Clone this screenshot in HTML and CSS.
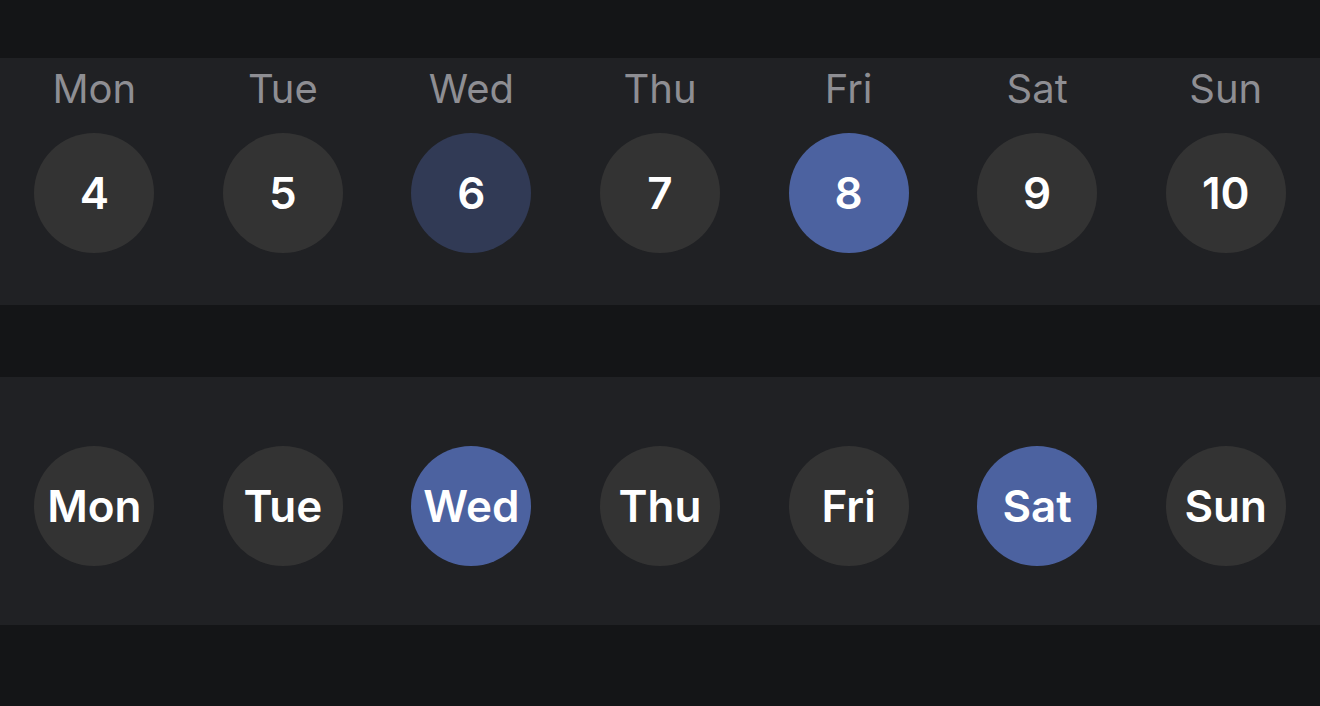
FILE: index.html
```html
<!DOCTYPE html>
<html>
<head>
<meta charset="utf-8">
<link rel="stylesheet" href="styles.css">
</head>
<body>
<div class="page">
  <section class="band band-dates">
    <div class="col"><div class="dow">Mon</div><div class="circle">4</div></div>
    <div class="col"><div class="dow">Tue</div><div class="circle">5</div></div>
    <div class="col"><div class="dow">Wed</div><div class="circle today">6</div></div>
    <div class="col"><div class="dow">Thu</div><div class="circle">7</div></div>
    <div class="col"><div class="dow">Fri</div><div class="circle selected">8</div></div>
    <div class="col"><div class="dow">Sat</div><div class="circle">9</div></div>
    <div class="col"><div class="dow">Sun</div><div class="circle">10</div></div>
  </section>
  <section class="band band-days">
    <div class="col"><div class="circle">Mon</div></div>
    <div class="col"><div class="circle">Tue</div></div>
    <div class="col"><div class="circle selected">Wed</div></div>
    <div class="col"><div class="circle">Thu</div></div>
    <div class="col"><div class="circle">Fri</div></div>
    <div class="col"><div class="circle selected">Sat</div></div>
    <div class="col"><div class="circle">Sun</div></div>
  </section>
</div>
</body>
</html>
```
FILE: styles.css
```css
html, body {
  margin: 0;
  padding: 0;
  background: #141517;
  font-family: Inter, "Noto Sans", sans-serif;
}
.page {
  width: 1320px;
  height: 706px;
  padding-top: 58px;
  box-sizing: border-box;
  display: flex;
  flex-direction: column;
  gap: 72px;
}
.band {
  background: #202124;
  display: flex;
}
.band-dates {
  height: 247px;
  box-sizing: border-box;
  padding-top: 7px;
}
.band-days {
  height: 248px;
  box-sizing: border-box;
  padding-top: 69px;
}
.col {
  flex: 1;
  display: flex;
  flex-direction: column;
  align-items: center;
}
.dow {
  font-size: 40px;
  line-height: 48px;
  color: #8e8e93;
  font-weight: 400;
}
.band-dates .circle {
  margin-top: 20px;
}
.circle {
  width: 120px;
  height: 120px;
  border-radius: 50%;
  background: #333333;
  color: #ffffff;
  display: flex;
  align-items: center;
  justify-content: center;
  font-size: 44px;
  font-weight: 600;
  white-space: nowrap;
}
.circle.today {
  background: #313a55;
}
.circle.selected {
  background: #4c62a0;
}
```
